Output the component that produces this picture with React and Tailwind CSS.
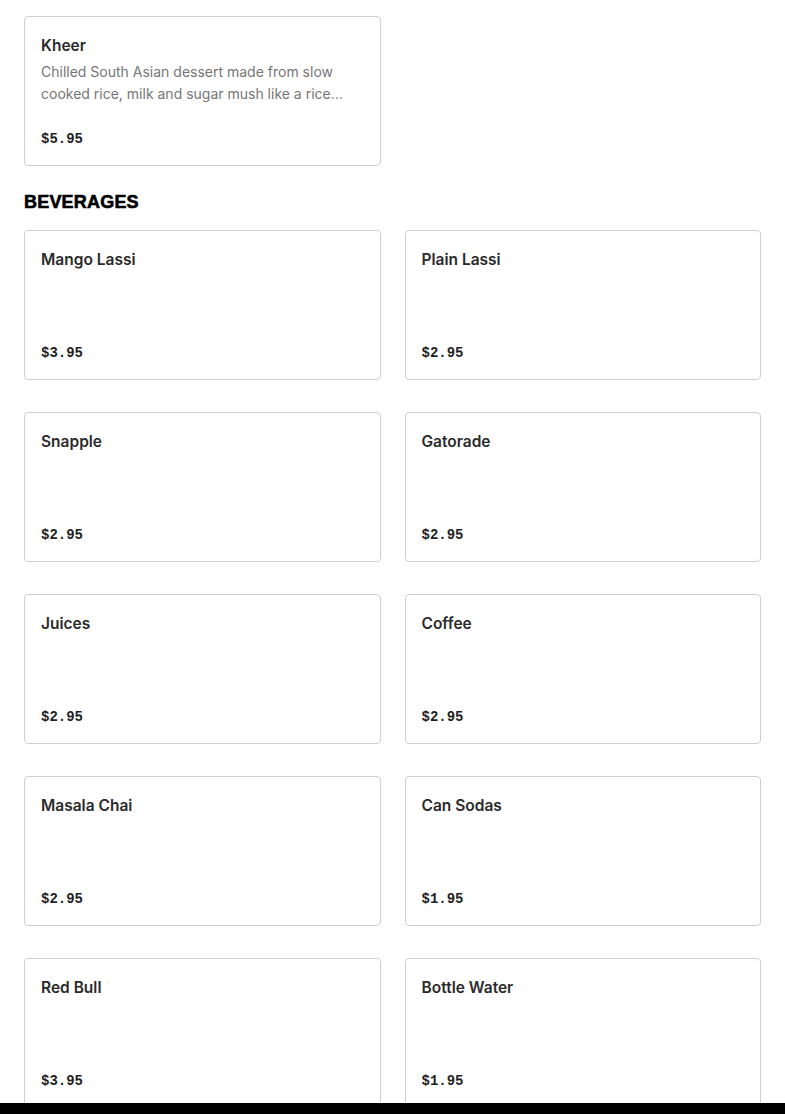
const dessert = [
  {
    name: "Kheer",
    description:
      "Chilled South Asian dessert made from slow cooked rice, milk and sugar mush like a rice pudding.",
    price: "$5.95",
  },
];

const beverages = [
  { name: "Mango Lassi", price: "$3.95" },
  { name: "Plain Lassi", price: "$2.95" },
  { name: "Snapple", price: "$2.95" },
  { name: "Gatorade", price: "$2.95" },
  { name: "Juices", price: "$2.95" },
  { name: "Coffee", price: "$2.95" },
  { name: "Masala Chai", price: "$2.95" },
  { name: "Can Sodas", price: "$1.95" },
  { name: "Red Bull", price: "$3.95" },
  { name: "Bottle Water", price: "$1.95" },
];

const MenuCard = ({ item }) => (
  <div className="flex h-[150px] flex-col rounded-[4px] border border-[#cfcfcf] bg-white px-4 pt-[17px] pb-4">
    <h3 className="text-[15.5px] leading-6 font-semibold text-[#2a2a2a] [font-family:Inter,sans-serif]">
      {item.name}
    </h3>
    {item.description && (
      <p className="mt-[3px] line-clamp-2 text-[14px] leading-[22px] text-[#767676] [font-family:Inter,sans-serif]">
        {item.description}
      </p>
    )}
    <div className="mt-auto text-[14px] leading-5 font-bold text-[#1f1f1f] [font-family:'Liberation_Mono',monospace]">
      {item.price}
    </div>
  </div>
);

const App = () => {
  return (
    <div className="min-h-screen bg-white px-6 pt-4 pb-10">
      <div className="grid grid-cols-2 gap-x-6 gap-y-8">
        {dessert.map((item) => (
          <MenuCard key={item.name} item={item} />
        ))}
      </div>

      <h2 className="mt-6 mb-4 text-[18px] leading-6 font-black tracking-[0.2px] text-black [-webkit-text-stroke:0.6px_black] [font-family:'Liberation_Sans',Arial,sans-serif]">
        BEVERAGES
      </h2>

      <div className="grid grid-cols-2 gap-x-6 gap-y-8">
        {beverages.map((item) => (
          <MenuCard key={item.name} item={item} />
        ))}
      </div>

      <div className="fixed right-0 bottom-0 left-0 h-[11px] bg-black" />
    </div>
  );
};

export default App;
